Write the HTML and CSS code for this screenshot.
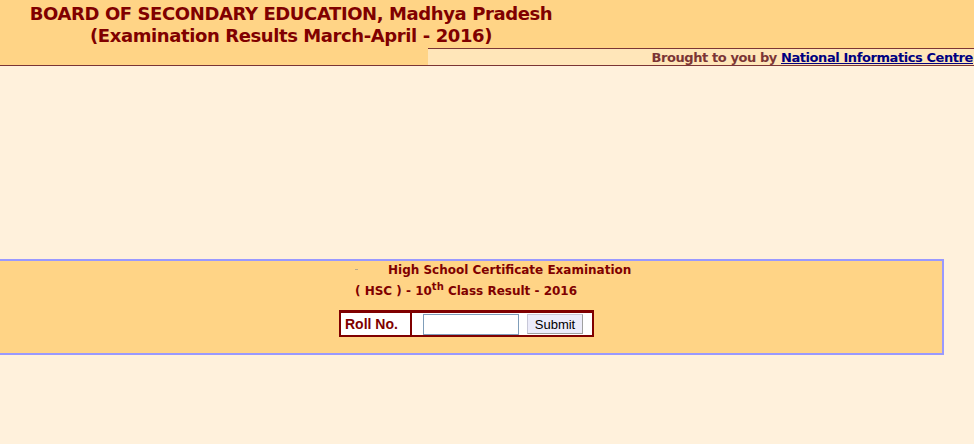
FILE: index.html
```html
<!DOCTYPE html>
<html>
<head>
<meta charset="utf-8">
<title>MP Board Results 2016</title>
<link rel="stylesheet" href="styles.css">
</head>
<body>
<div class="header">
  <div class="title">
    <div class="title-line">BOARD OF SECONDARY EDUCATION, Madhya Pradesh</div>
    <div class="title-line">(Examination Results March-April - 2016)</div>
  </div>
  <div class="credit-row">
    <div class="credit-spacer"></div>
    <div class="credit">Brought to you by <a href="#">National Informatics Centre</a></div>
  </div>
</div>
<div class="main">
  <div class="panel">
    <div class="heading">
      <div class="heading-line1"><span class="broken-img"></span><span class="heading-text">High School Certificate Examination</span></div>
      <div class="heading-line2">( HSC ) - 10<sup>th</sup> Class Result - 2016</div>
    </div>
    <form class="roll-form" onsubmit="return false;">
      <div class="roll-label">Roll No.</div>
      <div class="roll-field">
        <input class="roll-input" type="text">
        <button class="submit-btn" type="submit">Submit</button>
      </div>
    </form>
  </div>
</div>
</body>
</html>
```
FILE: styles.css
```css
html, body {
  margin: 0;
  padding: 0;
}
body {
  background: #fff1dc;
  font-family: "DejaVu Sans", Verdana, sans-serif;
  overflow: hidden;
}
.header {
  background: #ffd486;
  border-bottom: 1px solid #7b3535;
}
.title {
  width: 580px;
  text-align: center;
  color: #800000;
  font-weight: bold;
  font-size: 18px;
  line-height: 22px;
  letter-spacing: -0.4px;
  padding-top: 3px;
  height: 48px;
  box-sizing: border-box;
  padding-left: 2px;
}
.credit-row {
  display: flex;
}
.credit-spacer {
  width: 428px;
  flex: none;
}
.credit {
  flex: 1;
  background: #ffe6b9;
  border-top: 1px solid #7b3535;
  height: 16px;
  font-size: 13px;
  line-height: 17px;
  font-weight: bold;
  color: #7b3535;
  text-align: right;
  white-space: nowrap;
  letter-spacing: -0.42px;
  padding-right: 1px;
}
.credit a {
  color: #000080;
}
.main {
  padding-top: 193px;
}
.panel {
  width: 946px;
  margin-left: -2px;
  box-sizing: border-box;
  border: 2px solid #9999ff;
  background: #ffd486;
  height: 96px;
  color: #800000;
  font-weight: bold;
  font-size: 12px;
}
.heading {
  padding-left: 355px;
  padding-top: 0;
}
.heading-line1 {
  display: flex;
  align-items: center;
  height: 18px;
}
.broken-img {
  width: 3px;
  height: 1px;
  background: #b9a88a;
  margin-right: 30px;
  margin-top: -1px;
}
.heading-line2 {
  height: 22px;
  line-height: 24px;
}
.heading-line2 sup {
  font-size: 10px;
  line-height: 0;
}
.roll-form {
  display: flex;
  width: 255px;
  height: 27px;
  box-sizing: border-box;
  margin: 9px 0 0 339px;
  border: 2px solid #800000;
  border-top-width: 3px;
  background: #fff;
}
.roll-label {
  width: 71px;
  border-right: 2px solid #800000;
  font-family: "Liberation Sans", Arial, sans-serif;
  font-size: 14px;
  line-height: 22px;
  padding-left: 4px;
  box-sizing: border-box;
}
.roll-field {
  display: flex;
  align-items: center;
  padding-left: 11px;
  gap: 8px;
}
.roll-input {
  width: 96px;
  height: 21px;
  box-sizing: border-box;
  border: 1px solid #7f9db9;
  padding: 0;
  margin: 0;
  outline: none;
  background: #fff;
}
.submit-btn {
  width: 56px;
  height: 20px;
  box-sizing: border-box;
  font-family: "Liberation Sans", Arial, sans-serif;
  font-size: 13px;
  color: #000;
  background: #ececfa;
  border: 1px solid #c8c8d8;
  border-right-color: #a0a0a0;
  border-bottom-color: #a0a0a0;
  padding: 0;
  margin: 0;
}
```
